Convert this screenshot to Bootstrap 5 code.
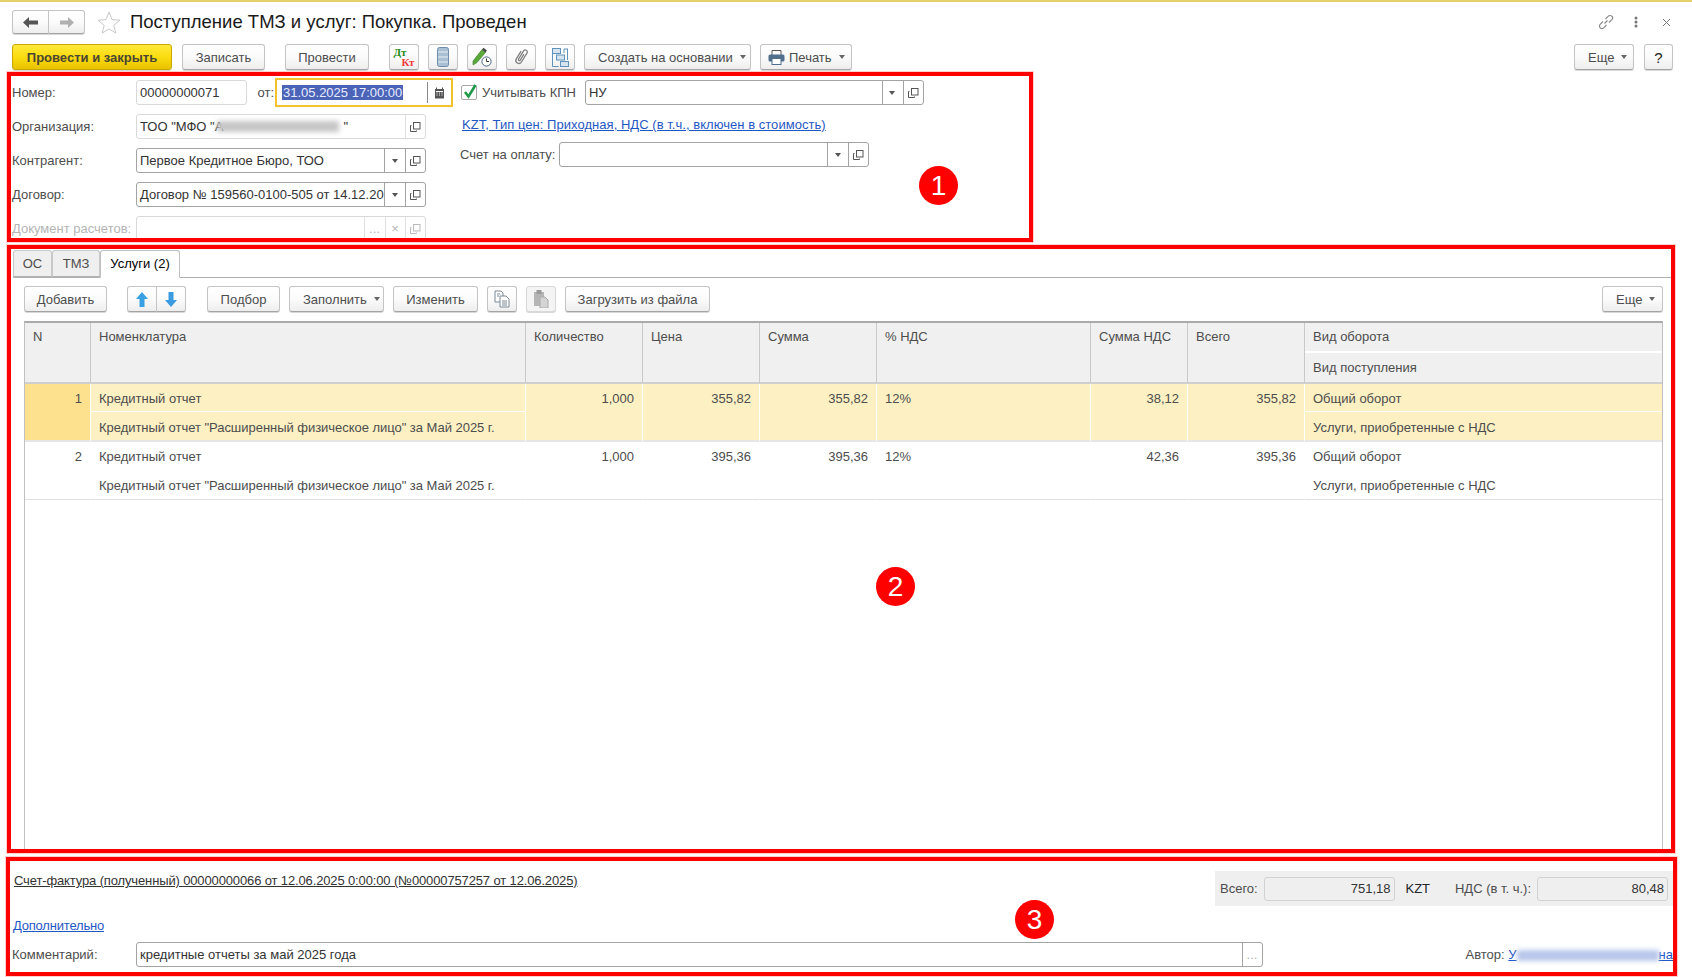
<!DOCTYPE html>
<html lang="ru">
<head>
<meta charset="utf-8">
<title>Поступление ТМЗ и услуг</title>
<link href="https://cdn.jsdelivr.net/npm/bootstrap@5.3.0/dist/css/bootstrap.min.css" rel="stylesheet">
<style>
html,body{height:977px;overflow:hidden}
body{font-family:"Liberation Sans",Arial,sans-serif;font-size:13px;line-height:15px;color:#4d4d4d;background:#fff}
.goldtop{height:2px;background:#e6cf6a}
.hdr{height:24px;margin:8px 21px 0 12px}
.ttl{font-size:18.5px;line-height:24px;color:#1a1a1a;margin:0 0 0 9px;font-weight:400}
.star{margin-left:12px}
.tbar{height:26px;margin:10px 19px 0 12px}
.btn.ob{--bs-btn-padding-x:13px;--bs-btn-padding-y:0;--bs-btn-font-size:13px;--bs-btn-line-height:15px;--bs-btn-border-radius:3px;height:26px;display:inline-flex;align-items:center;justify-content:center;white-space:nowrap;color:#4d4d4d;background:linear-gradient(#ffffff,#fbfbfb 50%,#eeeeee);border:1px solid #c4c4c4;border-bottom:1px solid #a4a4a4;box-shadow:0 1px 0 #d8d8d8}
.btn.ob.yel{background:linear-gradient(#ffe93a,#fbdc10 50%,#e8c200);border-color:#c8a800;font-weight:700;color:#4a4632;width:160px;padding:0}
.btn.ob.ico{width:30px;padding:0}
.btn.ob.ico.off{background:#f4f4f4;border-color:#d8d8d8}
.btn.ob.st{justify-content:flex-start;padding:0 0 0 13px}
.btn.ob.st.prn{padding-left:7px;width:92px}
.nv{width:37px;height:24px!important;padding:0!important}
.w83{width:83px;padding:0!important}.w84{width:84px;padding:0!important}
.m9{margin-left:9px}.m10{margin-left:10px}.m20{margin-left:20px}.m21{margin-left:21px}.m24{margin-left:24px}
.dropdown-toggle::after{border-top-width:4px;border-left-width:3px;border-right-width:3px;margin-left:7px;vertical-align:2px;color:#666}
.qm{font-size:15px;color:#222}
.dtk{display:flex;flex-direction:column;width:21px;font-weight:700;font-size:11px;line-height:10px;font-family:"Liberation Serif",serif}
.dtk b:first-child{color:#1f8a10;align-self:flex-start}.dtk b:last-child{color:#f03a3a;align-self:flex-end}
.zone{border:4px solid #f00;position:relative;overflow:hidden;box-shadow:0 0 0 1px #ffd0d0}
.z1{margin:2px 0 0 7px;width:1026px;height:170px;padding:4px 0 0 0}
.z2{margin:3px 0 0 7px;width:1668px;height:608px;padding-top:1px}
.z3{margin:4px 0 0 6px;width:1671px;height:119px;padding-top:10px}
.badge-no{position:absolute;width:39px;height:39px;border-radius:50%;background:#f00;color:#fff;font-size:28px;line-height:39px;text-align:center}
.bn1{left:908px;top:90px}.bn2{left:865px;top:318px}.bn3{left:1005px;top:39px}
.lft{width:442px;gap:9px}
.frow{height:25px}
.lab{width:125px;padding-left:1px;flex:none;white-space:nowrap}
.lab.off,.off-t{color:#b5b5b5}
.fld{height:25px;display:flex;align-items:stretch;border:1px solid #a3a3a3;border-radius:3px;background:#fff;color:#333;overflow:hidden;flex:none}
.fld.lt{border-color:#d9d9d9}
.fld .tx{flex:1 1 auto;padding:0 3px;display:flex;align-items:center;white-space:nowrap;overflow:hidden;min-width:0}
.fld .cb{width:20px;flex:none;border-left:1px solid #a3a3a3;display:flex;align-items:center;justify-content:center;padding-right:1px}
.fld.lt .cb{border-color:#e0e0e0}
.fld .dd{width:21px}
.tri{width:0;height:0;border-left:3px solid transparent;border-right:3px solid transparent;border-top:4px solid #555}
.w111{width:111px}.w290{width:290px}
.ot{margin:0 1px 0 10px;width:18px}
.datef{width:178px;height:29px;border:2px solid #f4c22b;margin:-2px 0 -2px 0;border-radius:0;flex:none;display:flex;align-items:stretch;background:#fff}
.datef .tx{flex:1 1 auto;display:flex;align-items:center;padding:0 0 0 5px}
.datef .sel{background:#4b64b8;color:#e8ecff;line-height:15px;padding:0 1px;white-space:nowrap}
.datef .cb{width:24px;flex:none;border-left:1px solid #8a8a8a;display:flex;align-items:center;justify-content:center;margin:2px 0}
.rgt{margin-left:7px}
.chkbox{width:16px;height:15px;border:1px solid #a8a8a8;border-radius:2px;position:relative;flex:none;margin:0 5px 0 1px;background:#fff}
.chkbox svg{position:absolute;left:0;top:-3px}
.w340{width:339px;margin-left:9px}
.lnk{color:#1f58c4;text-decoration:underline;white-space:nowrap}
.lnk1{margin:12px 0 0 2px;height:15px;display:block;letter-spacing:.04px}
.acc{margin-top:10px;height:25px}
.w309{width:310px;margin-left:4px}
.blr{display:inline-block;filter:blur(2.5px);vertical-align:middle}
.blr1{width:122px;height:11px;background:#c6c6c6;margin-left:-6px;margin-right:4px}
.blr2{width:142px;height:11px;background:#b7c6ea}
.tabz{--bs-nav-tabs-border-color:#b0b0b0;--bs-nav-tabs-border-radius:3px;--bs-nav-link-padding-x:0;--bs-nav-link-padding-y:0;margin-left:2px;height:28px;--bs-nav-tabs-border-width:1px}
.tabz .nav-link{height:27px;line-height:25px;background:#efefef;color:#4d4d4d;font-size:13px;text-align:center;border:1px solid #c8c8c8;border-bottom-color:#b0b0b0;margin:0;border-radius:3px 3px 0 0}
.tabz .nav-link.active{background:#fff;border-color:#c0c0c0 #c0c0c0 #fff;height:28px}
.t1{width:39px}.t2{width:48px}.t3{width:80px}
.tb2{margin:8px 0 0 13px;width:1639px;height:26px}
.w60{width:61px}
.w73{width:73px;padding:0!important}.w95{width:95px}.w85{width:85px;padding:0!important}.w145{width:145px;padding:0!important}
.nv2{width:30px;padding:0!important}
.gwrap{margin:9px 0 0 13px;width:1639px;height:530px;border:1px solid #c0c0c0;border-top:2px solid #ababab;border-bottom:0}
.table.gridt{table-layout:fixed;border-collapse:separate;border-spacing:0;margin:0;width:1637px;--bs-table-bg:transparent;font-size:13px;line-height:15px;color:#4d4d4d}
.table.gridt th,.table.gridt td{padding:7px 8px 0;vertical-align:top;font-weight:400;border-width:0;color:#4d4d4d;white-space:nowrap;overflow:hidden;box-shadow:none}
.table.gridt thead th{background:#f0f0f0;border-right:1px solid #c9c9c9;padding-top:6px}
.table.gridt thead th:last-child,.table.gridt tbody td:last-child{border-right:0}
.table.gridt .hr1 th{height:30px}
.table.gridt .hr2 th{height:31px;border-bottom:2px solid #cfcfcf;padding-top:7px}
.table.gridt .hr1 th.sp{border-bottom:2px solid #cfcfcf}
.table.gridt .hr1 th.ln{border-bottom:2px solid #fff}
.table.gridt td.num{text-align:right}
.table.gridt .s td{background:#fdf1c4;border-right:1px solid #fff}
.table.gridt .s td.cur{background:#fee18f;border-right:1px solid #fff}
.table.gridt .a td{height:28px}
.table.gridt .a td.ln{border-bottom:1px solid #fff}
.table.gridt .b td{height:30px;padding-top:8px;border-bottom:2px solid #e6e6e6}
.table.gridt .a td.rs{border-bottom:2px solid #e6e6e6}
.table.gridt .c td{height:29px;border-right:1px solid transparent}
.table.gridt .d td{height:29px;border-bottom:1px solid #e0e0e0;border-right:1px solid transparent}
.table.gridt .c td.rs{border-bottom:1px solid #e0e0e0}
.tight{letter-spacing:-.035px}
.rowa{height:35px;margin-right:0}
.sflink{color:#333;text-decoration:underline;margin:2px 0 0 4px;white-space:nowrap;letter-spacing:-.135px}
.tot{width:458px;height:35px;background:#efefef;padding:5px}
.tot .fld{height:24px;width:131px;border-color:#d2d2d2;background:#efefef}
.tot .fld .tx{justify-content:flex-end}
.l1{width:44px}.l2{width:50px;padding-left:11px;box-sizing:content-box}
.l3{width:83px;white-space:nowrap}
.more{display:block;margin:12px 0 0 3px;height:15px;letter-spacing:-.2px}
.rowc{height:25px;margin-top:9px}
.labc{width:126px;flex:none;padding-left:2px}
.w1127{width:1127px}
.aut{margin-left:auto;white-space:nowrap}
</style>
</head>
<body>
<svg width="0" height="0" class="position-absolute">
<symbol id="op" viewBox="0 0 12 12"><rect x="4.5" y="1.5" width="6.5" height="6.5" fill="none" stroke="#555"/><path d="M2.5 4.5H1.5V10.5H7.500V9.500" fill="none" stroke="#555"/></symbol>
<symbol id="opg" viewBox="0 0 12 12"><rect x="4.500" y="1.500" width="6.500" height="6.500" fill="none" stroke="#bbb"/><path d="M2.500 4.500H1.500V10.500H7.500V9.500" fill="none" stroke="#bbb"/></symbol>
</svg>
<div class="goldtop"></div>

<div class="hdr d-flex align-items-center">
  <div class="btn-group">
    <button class="btn ob nv" type="button" aria-label="Назад"><svg width="15" height="11" viewBox="0 0 15 11"><path d="M0 5.500 6 0V3.500H15V7.500H6V11Z" fill="#555"/></svg></button>
    <button class="btn ob nv" type="button" aria-label="Вперед"><svg width="14" height="11" viewBox="0 0 14 11"><path d="M14 5.500 8 0V3.500H0V7.500H8V11Z" fill="#b0b0b0"/></svg></button>
  </div>
  <svg class="star" width="24" height="23" viewBox="0 0 24 23"><path d="M12 1l3 7.600 8 .6-6.200 5.100 2 7.800L12 17.900 5.200 22.100l2-7.800L1 9.200l8-.6z" fill="#fff" stroke="#c8c8c8"/></svg>
  <h1 class="ttl">Поступление ТМЗ и услуг: Покупка. Проведен</h1>
  <div class="ms-auto d-flex align-items-center">
    <svg width="16" height="16" viewBox="0 0 16 16"><path d="M6.500 9.500l3-3M5 7.500 2.200 10.300a2.400 2.400 0 0 0 3.500 3.500L8.500 11M7.500 5l2.800-2.800a2.400 2.400 0 0 1 3.500 3.500L11 8.500" fill="none" stroke="#8a8a8a" stroke-width="1.200"/></svg>
    <svg class="m20" width="4" height="12" viewBox="0 0 4 12"><circle cx="2" cy="2" r="1.500" fill="#777"/><circle cx="2" cy="6" r="1.500" fill="#777"/><circle cx="2" cy="10" r="1.500" fill="#777"/></svg>
    <svg class="m24" width="9" height="9" viewBox="0 0 9 9"><path d="M1 1l7 7M8 1 1 8" stroke="#777"/></svg>
  </div>
</div>

<div class="tbar d-flex align-items-center">
  <button class="btn ob yel" type="button">Провести и закрыть</button>
  <button class="btn ob w83 m10" type="button">Записать</button>
  <button class="btn ob w84 m20" type="button">Провести</button>
  <button class="btn ob ico m20" type="button" aria-label="Дт Кт"><span class="dtk"><b>Дт</b><b>Кт</b></span></button>
  <button class="btn ob ico m9" type="button" aria-label="Список"><svg width="12" height="20" viewBox="0 0 12 20"><rect x=".500" y=".500" width="11" height="19" rx="2" fill="#a9bfd4" stroke="#6f8ca8"/><path d="M1 5h10M1 10h10M1 15h10" stroke="#e8eef4"/></svg></button>
  <button class="btn ob ico m9" type="button" aria-label="Правка"><svg width="20" height="20" viewBox="0 0 20 20"><path d="M1 14 10 2.500l3.500 3L5 15.500 1 18z" fill="#58a83c" stroke="#3f7d2a" stroke-width=".6"/><path d="M10 2.500l1.500-1.700 3.400 2.800L13.500 5.500z" fill="#444"/><circle cx="14.500" cy="14.500" r="4.600" fill="#fff" stroke="#4a6a88"/><path d="M14.500 11.500v3h2.500" fill="none" stroke="#333"/></svg></button>
  <button class="btn ob ico m9" type="button" aria-label="Вложения"><svg width="16" height="20" viewBox="-2 0 16 20"><path transform="rotate(32 6 10)" d="M3 5V14a3 3 0 0 0 6 0V3.500a2 2 0 0 0-4 0V13a1 1 0 0 0 2 0V6" fill="none" stroke="#808080" stroke-width="1.300"/></svg></button>
  <button class="btn ob ico m9" type="button" aria-label="Структура"><svg width="18" height="19" viewBox="0 0 18 19"><g fill="#d6e4f0" stroke="#5f93bd"><rect x="1.500" y=".500" width="8" height="5"/><rect x="5.500" y="7" width="8" height="5"/><rect x="9.500" y="13.500" width="8" height="5"/></g><path d="M1.500 5.500v13h6M17 1h-4v4M16.500 1v11" fill="none" stroke="#5f93bd"/></svg></button>
  <button class="btn ob st dropdown-toggle m9" type="button" style="width:167px">Создать на основании</button>
  <button class="btn ob st prn dropdown-toggle m9" type="button"><svg class="me-1" width="17" height="15" viewBox="0 0 17 15"><path d="M4 5V.500h9V5" fill="#fff" stroke="#555"/><rect x=".500" y="4.500" width="16" height="7" rx="1.500" fill="#4f6f8c"/><rect x="4" y="8.500" width="9" height="6" fill="#fff" stroke="#4f6f8c"/></svg>Печать</button>
  <button class="btn ob st dropdown-toggle ms-auto" type="button" style="width:60px">Еще</button>
  <button class="btn ob m10" type="button" style="width:29px;padding:0"><span class="qm">?</span></button>
</div>

<section class="zone z1 d-flex align-items-start">
  <div class="lft d-flex flex-column">
    <div class="frow d-flex align-items-center">
      <span class="lab">Номер:</span>
      <div class="fld lt w111"><span class="tx">00000000071</span></div>
      <span class="ot text-end">от:</span>
      <div class="datef"><span class="tx"><span class="sel">31.05.2025 17:00:00</span></span><span class="cb"><svg width="11" height="12" viewBox="0 0 11 12"><path d="M1 2h9v9.500H1z" fill="#555"/><path d="M2.500 .500V3M8.500 .500V3" stroke="#555"/><path d="M2 4.500h7" stroke="#fff"/><path d="M2.500 6h1M5 6h1M7.500 6h1M2.500 8h1M5 8h1M7.500 8h1" stroke="#fff"/></svg></span></div>
    </div>
    <div class="frow d-flex align-items-center">
      <span class="lab">Организация:</span>
      <div class="fld lt w290"><span class="tx">ТОО "МФО "А<span class="blr blr1"></span>"</span><span class="cb"><svg width="12" height="12"><use href="#op"/></svg></span></div>
    </div>
    <div class="frow d-flex align-items-center">
      <span class="lab">Контрагент:</span>
      <div class="fld w290"><span class="tx">Первое Кредитное Бюро, ТОО</span><span class="cb dd"><i class="tri"></i></span><span class="cb"><svg width="12" height="12"><use href="#op"/></svg></span></div>
    </div>
    <div class="frow d-flex align-items-center">
      <span class="lab">Договор:</span>
      <div class="fld w290"><span class="tx">Договор № 159560-0100-505 от 14.12.20</span><span class="cb dd"><i class="tri"></i></span><span class="cb"><svg width="12" height="12"><use href="#op"/></svg></span></div>
    </div>
    <div class="frow d-flex align-items-center">
      <span class="lab off">Документ расчетов:</span>
      <div class="fld lt w290"><span class="tx"></span><span class="cb dd off-t">...</span><span class="cb off-t">×</span><span class="cb"><svg width="12" height="12"><use href="#opg"/></svg></span></div>
    </div>
  </div>
  <div class="rgt d-flex flex-column">
    <div class="frow d-flex align-items-center">
      <span class="chkbox"><svg width="16" height="17" viewBox="0 0 16 17"><path d="M3 9l3.500 4.500L13.500 2" fill="none" stroke="#1e9a4a" stroke-width="2.600"/></svg></span>
      <span>Учитывать КПН</span>
      <div class="fld w340"><span class="tx">НУ</span><span class="cb dd"><i class="tri"></i></span><span class="cb"><svg width="12" height="12"><use href="#op"/></svg></span></div>
    </div>
    <a class="lnk lnk1" href="#">KZT, Тип цен: Приходная, НДС (в т.ч., включен в стоимость)</a>
    <div class="acc d-flex align-items-center">
      <span>Счет на оплату:</span>
      <div class="fld w309"><span class="tx"></span><span class="cb dd"><i class="tri"></i></span><span class="cb"><svg width="12" height="12"><use href="#op"/></svg></span></div>
    </div>
  </div>
  <div class="badge-no bn1">1</div>
</section>

<section class="zone z2">
  <ul class="nav nav-tabs tabz">
    <li class="nav-item"><a class="nav-link t1" href="#">ОС</a></li>
    <li class="nav-item"><a class="nav-link t2" href="#">ТМЗ</a></li>
    <li class="nav-item"><a class="nav-link t3 active" href="#">Услуги (2)</a></li>
  </ul>
  <div class="tb2 d-flex align-items-center">
    <button class="btn ob w83" type="button">Добавить</button>
    <div class="btn-group m20">
      <button class="btn ob nv2" type="button" aria-label="Вверх"><svg width="12" height="15" viewBox="0 0 12 15"><path d="M6 0l6 7H8.500v8h-5V7H0z" fill="#39a0e4"/></svg></button>
      <button class="btn ob nv2" type="button" aria-label="Вниз"><svg width="12" height="15" viewBox="0 0 12 15"><path d="M6 15l6-7H8.500V0h-5v8H0z" fill="#3b9be0"/></svg></button>
    </div>
    <button class="btn ob w73 m21" type="button">Подбор</button>
    <button class="btn ob st w95 m9 dropdown-toggle" type="button">Заполнить</button>
    <button class="btn ob w85 m9" type="button">Изменить</button>
    <button class="btn ob ico m9" type="button" aria-label="Копировать"><svg width="16" height="18" viewBox="0 0 16 18"><path d="M1 1h6l2 2v9H1z" fill="#fff" stroke="#7a8a96"/><path d="M6 6h6l3 3v8H6z" fill="#fff" stroke="#7a8a96"/><path d="M3 4h3M3 6h2M8 11h5M8 13h5M8 15h5" stroke="#7a8a96"/></svg></button>
    <button class="btn ob ico off m9" type="button" aria-label="Вставить"><svg width="16" height="18" viewBox="0 0 16 18"><rect x="1" y="2" width="10" height="14" fill="#b5b5b5"/><rect x="3.500" y="0" width="5" height="4" fill="#9a9a9a"/><path d="M7 7h5l3 3v8H7z" fill="#d4d4d4" stroke="#aaa"/></svg></button>
    <button class="btn ob w145 m9" type="button">Загрузить из файла</button>
    <button class="btn ob st w60 dropdown-toggle ms-auto" type="button">Еще</button>
  </div>
  <div class="gwrap">
    <table class="table gridt">
      <colgroup><col style="width:66px"><col style="width:435px"><col style="width:117px"><col style="width:117px"><col style="width:117px"><col style="width:214px"><col style="width:97px"><col style="width:117px"><col style="width:357px"></colgroup>
      <thead>
        <tr class="hr1"><th rowspan="2" class="sp">N</th><th rowspan="2" class="sp">Номенклатура</th><th rowspan="2" class="sp">Количество</th><th rowspan="2" class="sp">Цена</th><th rowspan="2" class="sp">Сумма</th><th rowspan="2" class="sp">% НДС</th><th rowspan="2" class="sp">Сумма НДС</th><th rowspan="2" class="sp">Всего</th><th class="ln">Вид оборота</th></tr>
        <tr class="hr2"><th>Вид поступления</th></tr>
      </thead>
      <tbody>
        <tr class="a s"><td rowspan="2" class="num cur rs">1</td><td class="ln">Кредитный отчет</td><td rowspan="2" class="num rs">1,000</td><td rowspan="2" class="num rs">355,82</td><td rowspan="2" class="num rs">355,82</td><td rowspan="2" class="rs">12%</td><td rowspan="2" class="num rs">38,12</td><td rowspan="2" class="num rs">355,82</td><td class="ln">Общий оборот</td></tr>
        <tr class="b s"><td class="tight">Кредитный отчет "Расширенный физическое лицо" за Май 2025 г.</td><td>Услуги, приобретенные с НДС</td></tr>
        <tr class="c"><td rowspan="2" class="num rs">2</td><td>Кредитный отчет</td><td rowspan="2" class="num rs">1,000</td><td rowspan="2" class="num rs">395,36</td><td rowspan="2" class="num rs">395,36</td><td rowspan="2" class="rs">12%</td><td rowspan="2" class="num rs">42,36</td><td rowspan="2" class="num rs">395,36</td><td>Общий оборот</td></tr>
        <tr class="d"><td class="tight">Кредитный отчет "Расширенный физическое лицо" за Май 2025 г.</td><td>Услуги, приобретенные с НДС</td></tr>
      </tbody>
    </table>
  </div>
  <div class="badge-no bn2">2</div>
</section>

<section class="zone z3">
  <div class="rowa d-flex justify-content-between align-items-start">
    <a class="sflink" href="#">Счет-фактура (полученный) 00000000066 от 12.06.2025 0:00:00 (№00000757257 от 12.06.2025)</a>
    <div class="tot d-flex align-items-center">
      <span class="l1">Всего:</span>
      <div class="fld"><span class="tx">751,18</span></div>
      <span class="l2 text-dark">KZT</span>
      <span class="l3">НДС (в т. ч.):</span>
      <div class="fld"><span class="tx">80,48</span></div>
    </div>
  </div>
  <a class="lnk more" href="#">Дополнительно</a>
  <div class="rowc d-flex align-items-center">
    <span class="labc">Комментарий:</span>
    <div class="fld w1127"><span class="tx">кредитные отчеты за май 2025 года</span><span class="cb off-t">...</span></div>
    <span class="aut">Автор: <a class="lnk" href="#">У<span class="blr blr2"></span>на</a></span>
  </div>
  <div class="badge-no bn3">3</div>
</section>
<script src="https://cdn.jsdelivr.net/npm/bootstrap@5.3.0/dist/js/bootstrap.bundle.min.js"></script>
</body>
</html>
